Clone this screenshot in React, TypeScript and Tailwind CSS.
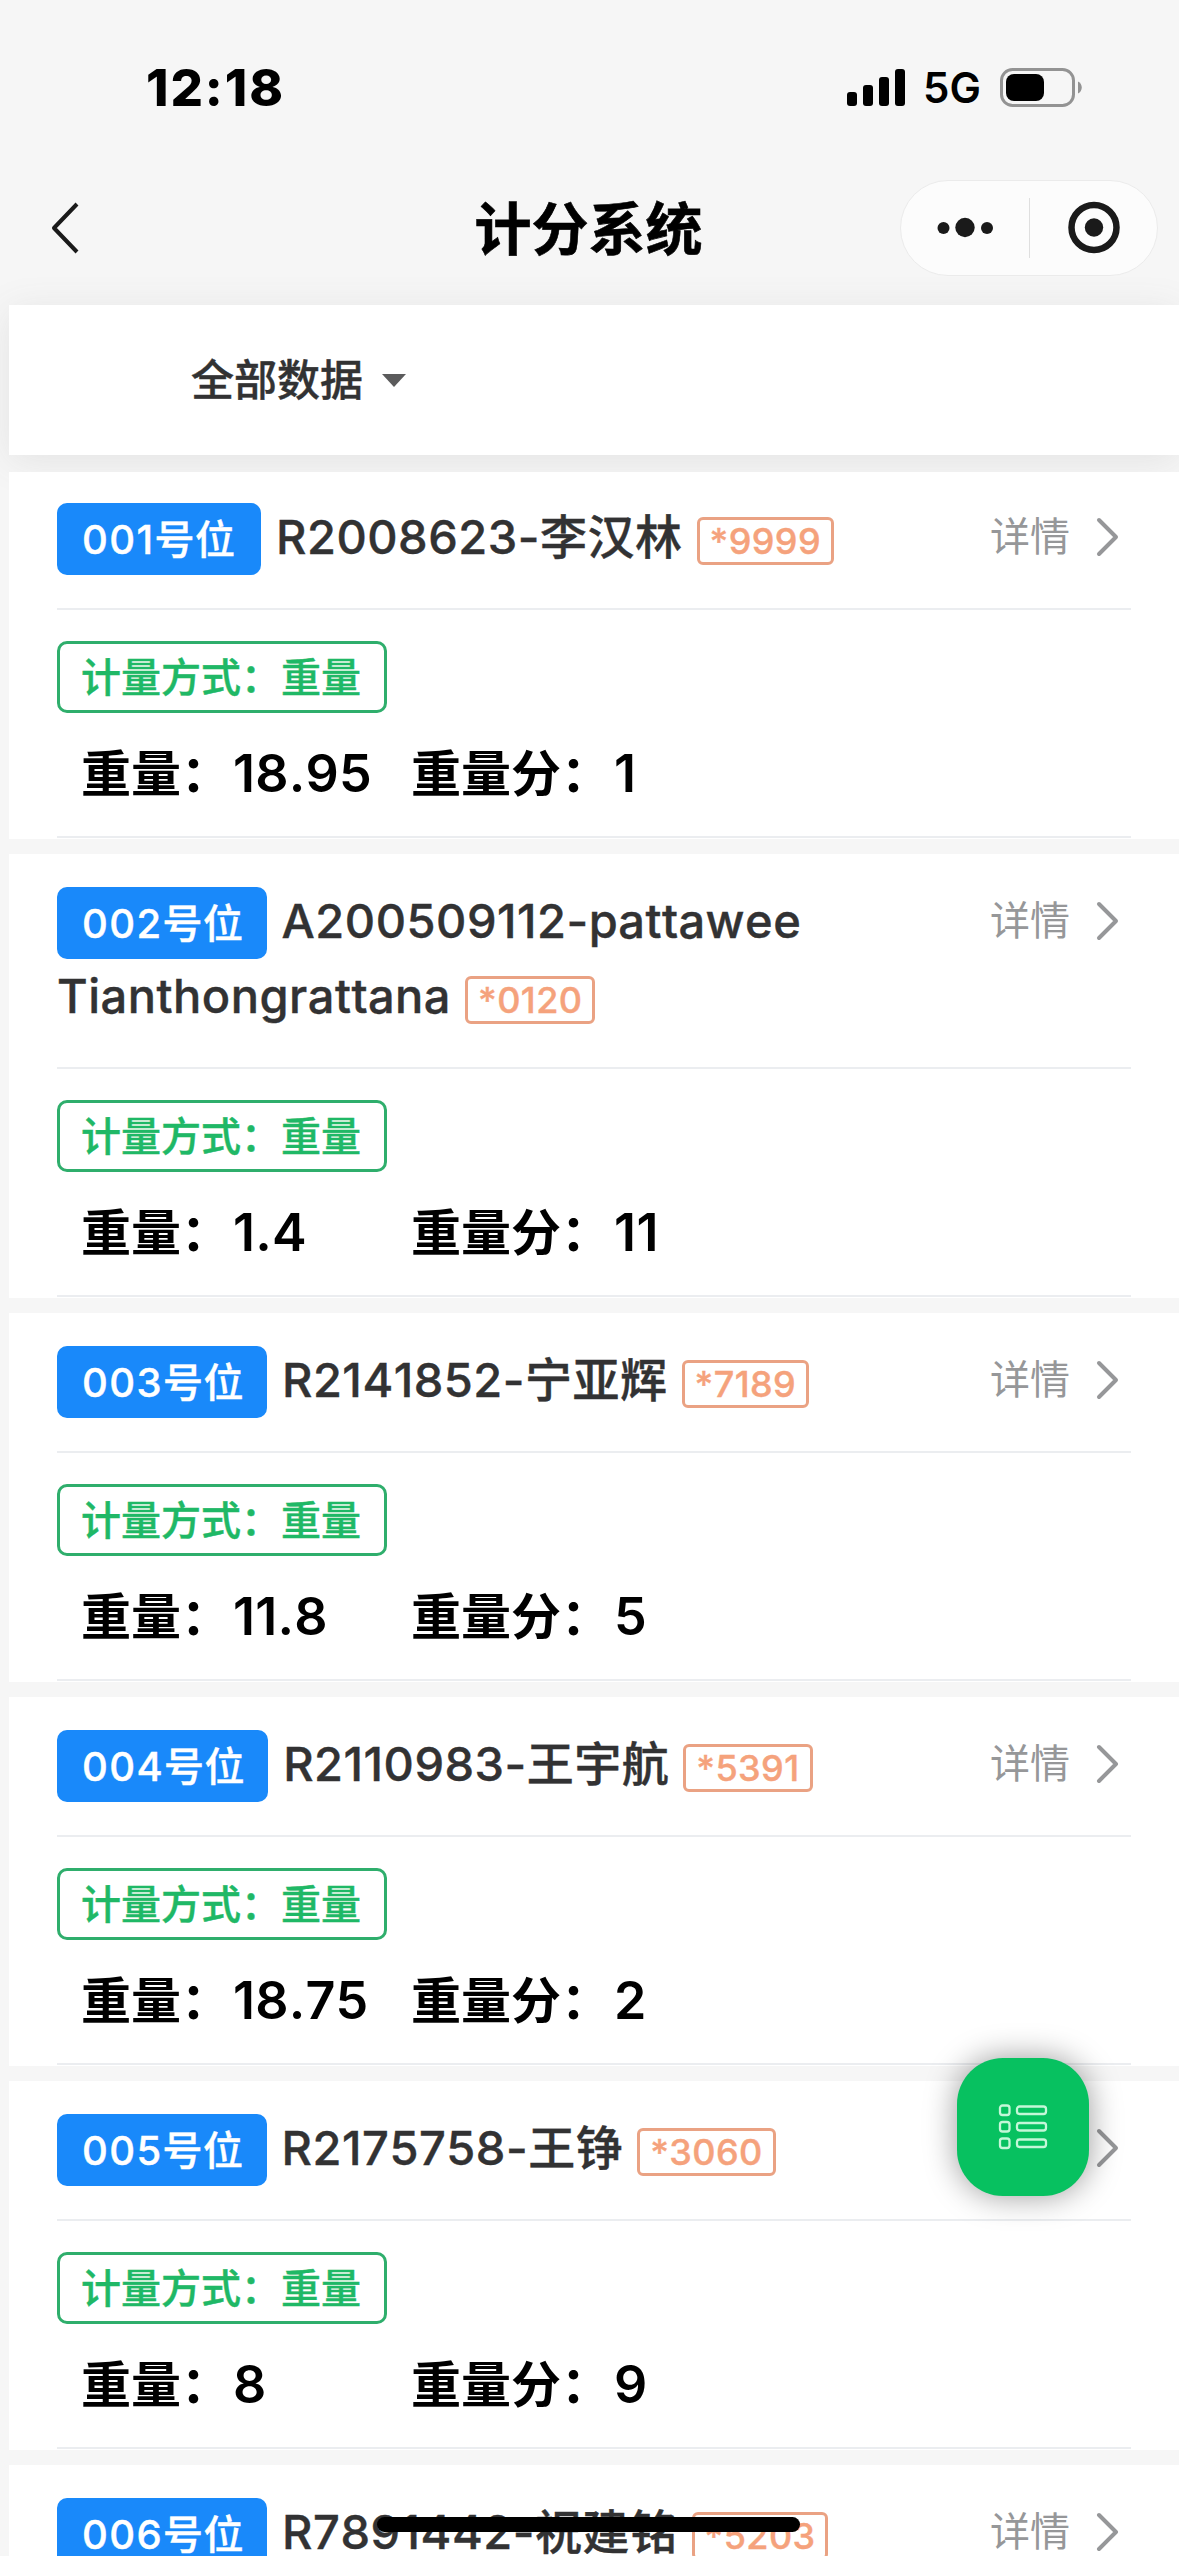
type ScoreItem = {
  seat: string;
  name: string;
  tail: string;
  weight: string;
  score: string;
};

const items: ScoreItem[] = [
  { seat: "001", name: "R2008623-李汉林", tail: "*9999", weight: "18.95", score: "1" },
  { seat: "002", name: "A200509112-pattawee Tianthongrattana", tail: "*0120", weight: "1.4", score: "11" },
  { seat: "003", name: "R2141852-宁亚辉", tail: "*7189", weight: "11.8", score: "5" },
  { seat: "004", name: "R2110983-王宇航", tail: "*5391", weight: "18.75", score: "2" },
  { seat: "005", name: "R2175758-王铮", tail: "*3060", weight: "8", score: "9" },
  { seat: "006", name: "R7891442-祝建铭", tail: "*5203", weight: "12.6", score: "4" },
];

function StatusBar() {
  return (
    <div className="flex h-[167px] items-start justify-between pt-[56px] pl-[146px] pr-[97px]">
      <span className="text-[51px] leading-[64px] font-extrabold tracking-[1.9px] text-black">12:18</span>
      <div className="flex h-[64px] items-center">
        <svg width="58" height="38" viewBox="0 0 58 38" className="mr-[18px]">
          <rect x="0" y="23" width="10" height="14" rx="3" />
          <rect x="16" y="16" width="10" height="21" rx="3" />
          <rect x="32" y="8" width="10" height="29" rx="3" />
          <rect x="48" y="0" width="10" height="37" rx="3" />
        </svg>
        <span className="w-[59px] text-[42px] leading-[66px] font-semibold text-black">5G</span>
        <svg width="82" height="40" viewBox="0 0 82 40" className="ml-[18px]">
          <rect x="1.5" y="1.5" width="72" height="36" rx="11" fill="none" stroke="#939393" strokeWidth="3" />
          <rect x="6" y="6" width="38" height="27" rx="8" />
          <path d="M78 13.5c5 2 5 10 0 12z" fill="#939393" />
        </svg>
      </div>
    </div>
  );
}

function NavBar() {
  return (
    <div className="flex h-[138px] items-start justify-between pr-[21px] pl-[50px]">
      <svg width="227" height="54" viewBox="0 0 227 54" fill="none" className="mt-[34px]">
        <path d="M27 3 4 27l23 24" stroke="#1a1a1a" strokeWidth="4" strokeLinejoin="round" />
      </svg>
      <h1 className="mt-[23px] text-[57px] leading-[80px] font-bold text-black [-webkit-text-stroke:0.6px]">计分系统</h1>
      <div className="mt-[13px] flex h-[96px] w-[258px] items-center rounded-full border border-[#ebebeb] bg-[#fcfcfc]">
        <svg width="128" height="60" viewBox="0 0 128 60" fill="#1a1a1a">
          <circle cx="42.5" cy="30" r="6" />
          <circle cx="64" cy="29.5" r="9.7" />
          <circle cx="86" cy="30" r="6" />
        </svg>
        <div className="h-[60px] w-[1px] bg-[#dfdfdf]" />
        <svg width="127" height="60" viewBox="0 0 127 60">
          <circle cx="64" cy="29.5" r="22.5" fill="none" stroke="#1a1a1a" strokeWidth="6.5" />
          <circle cx="64" cy="29.5" r="9.2" fill="#1a1a1a" />
        </svg>
      </div>
    </div>
  );
}

function FilterBar() {
  return (
    <div className="ml-[9px] flex h-[150px] items-center bg-white pl-[182px] shadow-[0_6px_36px_rgba(100,101,102,0.12)]">
      <span className="text-[43px] leading-[60px] font-medium text-[#323233] [-webkit-text-stroke:0.4px]">全部数据</span>
      <svg width="24" height="13" viewBox="0 0 24 13" className="ml-[19px]">
        <path d="M0 0h24L12 13z" fill="#5b5b5c" />
      </svg>
    </div>
  );
}

function ScoreCard({ item }: { item: ScoreItem }) {
  return (
    <section className="group mb-[15px] ml-[9px] bg-white pr-[48px] pl-[48px]">
      <div className="flex justify-between border-b-2 border-[#ebedf0] pt-[29px] pb-[34px] group-first:pt-[27px]">
        <div className="w-[860px] text-[47px] leading-[75px] font-medium tracking-[0.5px] text-[#323233] [-webkit-text-stroke:0.4px] [font-kerning:none]">
          <span className="mr-[2px] -mb-[2px] inline-block h-[72px] min-w-[204px] rounded-[10px] bg-[#1989fa] pr-[23px] pl-[25px] text-[40px] leading-[73px] text-white">
            <span className="tracking-[1.4px]">{item.seat}</span>号位
          </span>{" "}
          {item.name}{" "}
          <span className="ml-[1px] inline-block h-[48px] rounded-[6px] border-[3px] border-[#eaa283] px-[10px] text-[36px] leading-[42px] tracking-[0.4px] text-[#f5a27c]">
            {item.tail}
          </span>
        </div>
        <div className="flex h-[75px] items-center pr-[11px] text-[40px] leading-[75px] text-[#969799]">
          详情
          <svg width="24" height="40" viewBox="0 0 24 40" fill="none" className="ml-[26px]">
            <path d="M3 3l17 17L3 37" stroke="#969799" strokeWidth="4" strokeLinecap="round" strokeLinejoin="round" />
          </svg>
        </div>
      </div>
      <div className="h-[228px] border-b-2 border-[#ebedf0] pt-[31px]">
        <div className="flex h-[72px] w-[330px] items-center rounded-[10px] border-[3px] border-[#2fae6c] pt-[2px] pl-[21px] text-[40px] leading-[66px] font-medium text-[#1fb866] [-webkit-text-stroke:0.4px]">
          计量方式：重量
        </div>
        <div className="mt-[23px] flex pl-[24px] text-[50px] leading-[75px] font-semibold text-black">
          <div className="w-[330px]">
            重量：<span className="ml-[2px] text-[52px] tracking-[0.2px] [font-kerning:none]">{item.weight}</span>
          </div>
          <div>
            重量分：<span className="ml-[3px] text-[52px] tracking-[0.6px] [font-kerning:none]">{item.score}</span>
          </div>
        </div>
      </div>
      <div className="h-[1px]" />
    </section>
  );
}

function FloatingButton() {
  return (
    <button
      type="button"
      className="absolute top-[2058px] left-[957px] z-20 flex h-[138px] w-[132px] items-center justify-center rounded-[46px] bg-[#07c160] shadow-[0_0_32px_rgba(0,0,0,0.4)]"
    >
      <svg width="50" height="46" viewBox="0 0 50 46" fill="none" stroke="#c4f7d8" strokeWidth="2.3">
        {[1.5, 18, 34.5].map((y) => (
          <g key={y}>
            <rect x="2" y={y} width="9.5" height="9.5" rx="2.5" />
            <rect x="19" y={y + 1} width="29" height="7.5" rx="2.5" />
          </g>
        ))}
      </svg>
    </button>
  );
}

export default function App() {
  return (
    <main className="relative h-[2556px] w-[1179px] overflow-hidden bg-[#f6f6f6] font-['Inter','Noto_Sans_CJK_SC',sans-serif]">
      <StatusBar />
      <NavBar />
      <FilterBar />
      <div className="relative z-10 pt-[17px]">
        {items.map((item) => (
          <ScoreCard key={item.seat} item={item} />
        ))}
      </div>
      <FloatingButton />
      <div className="absolute top-[2517px] left-[377px] z-30 h-[15px] w-[423px] rounded-full bg-black" />
    </main>
  );
}
